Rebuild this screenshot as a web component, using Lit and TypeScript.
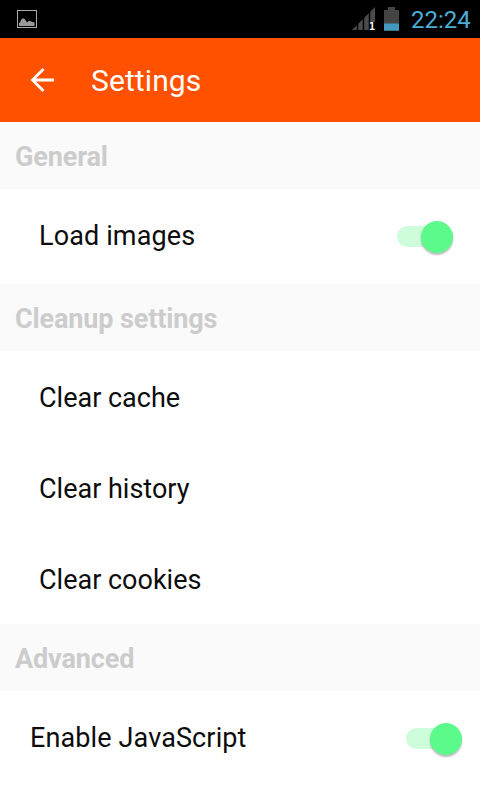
import { LitElement, html, css } from "lit";
import { customElement } from "lit/decorators.js";

@customElement("status-bar")
class StatusBar extends LitElement {
  static styles = css`
    :host { display: flex; height: 38px; align-items: center; background: #000; padding: 0 8px 0 17px; box-sizing: border-box; }
    .spacer { flex: 1; }
    svg { display: block; flex: none; }
    .signal { margin-right: 8px; }
    .time { font: 24px/38px Roboto, sans-serif; color: #4aaed6; margin-left: 12px; width: 61px; white-space: nowrap; padding-top: 2px; box-sizing: border-box; }
  `;
  render() {
    return html`
      <svg width="20" height="19" viewBox="0 0 20 19"><rect x=".5" y=".5" width="19" height="17" fill="none" stroke="#aaa"/><path d="M2 16V13Q3.500 12.500 4 10Q6 6.500 8.500 10L10 12.500Q12 9.500 14 11.500L17.500 12.500V16Z" fill="#999"/></svg>
      <div class="spacer"></div>
      <svg class="signal" width="25" height="24" viewBox="0 0 25 24"><path d="M1 23L24 0V23Z" fill="#4b4b4b"/><path d="M6.500 0V23M12.500 0V23M18.500 0V23" stroke="#000" stroke-width="1.500"/><path d="M18 15H24V24H18Z" fill="#000"/><text x="18" y="23" fill="#fff" font-size="10" font-weight="700" font-family="DejaVu Sans Mono, monospace">1</text></svg>
      <svg width="15" height="24" viewBox="0 0 15 24"><path d="M4 0H11V3H15V24H0V3H4Z" fill="#444"/><path d="M0 16.500H15V23.500H0Z" fill="#4199c1"/></svg>
      <div class="time">22:24</div>`;
  }
}

@customElement("toggle-switch")
class ToggleSwitch extends LitElement {
  static styles = css`
    :host { display: flex; align-items: center; width: 56px; height: 32px; }
    .track { width: 50px; height: 21px; flex: none; border-radius: 11px; background: #cdfddb; }
    .thumb { width: 32px; height: 32px; flex: none; margin-left: -26px; border-radius: 50%; background: #5cfa8a; box-shadow: 0 2px 2px #0004; }
  `;
  render() {
    return html`<div class="track"></div><div class="thumb"></div>`;
  }
}

@customElement("app-root")
class AppRoot extends LitElement {
  static styles = css`
    :host { display: block; height: 800px; overflow: hidden; background: #fff; font-family: Roboto, sans-serif; color: #0c0c0c; }
    .bar { display: flex; align-items: center; height: 84px; background: #ff5100; color: #fff; padding-left: 30px; gap: 36px; font-size: 30px; letter-spacing: .1px; }
    .bar span { padding-top: 1px; }
    .head { height: 67px; line-height: 70px; padding-left: 15px; background: #fafafa; color: #ccc; font-size: 27px; font-weight: 700; letter-spacing: -.13px; }
    .row { display: flex; align-items: center; justify-content: space-between; height: 91px; padding: 2px 27px 0 39px; box-sizing: border-box; font-size: 27px; }
    .tall { height: 95px; padding-top: 0; letter-spacing: .12px; }
    .tall span { padding-bottom: 2px; }
    .wide { padding: 0 18px 0 30px; }
  `;
  render() {
    return html`
      <status-bar></status-bar>
      <div class="bar"><svg width="25" height="24" viewBox="0 0 25 24"><path d="M24 12H2M13.500 1L2.500 12L13.500 23" fill="none" stroke="#fff" stroke-width="2.800"/></svg><span>Settings</span></div>
      <div class="head">General</div>
      <div class="row tall"><span>Load images</span><toggle-switch></toggle-switch></div>
      <div class="head">Cleanup settings</div>
      <div class="row">Clear cache</div>
      <div class="row">Clear history</div>
      <div class="row">Clear cookies</div>
      <div class="head">Advanced</div>
      <div class="row tall wide"><span>Enable JavaScript</span><toggle-switch></toggle-switch></div>`;
  }
}
